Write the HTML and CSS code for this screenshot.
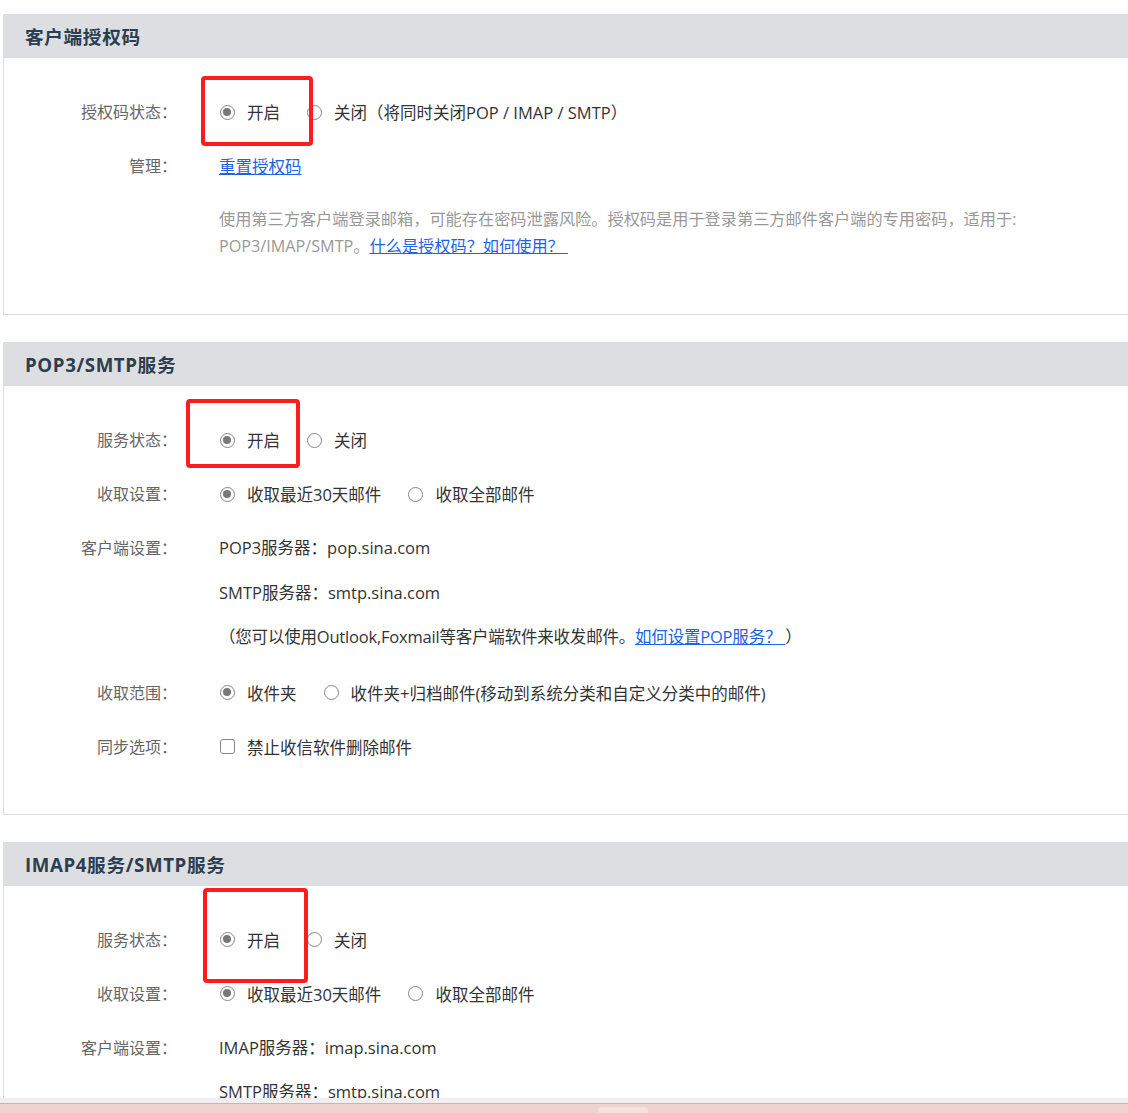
FILE: index.html
```html
<!doctype html>
<html lang="zh-CN">
  <head>
    <meta charset="UTF-8" />
    <meta name="viewport" content="width=device-width, initial-scale=1.0" />
    <title>客户端设置</title>
    <link rel="stylesheet" href="styles.css">
  </head>
  <body>
    <!-- 客户端授权码 -->
    <div class="section">
      <div class="section-head">客户端授权码</div>
      <div class="section-body body-auth">
        <div class="row">
          <div class="label">授权码状态：</div>
          <div class="value">
            <span class="opt"><span class="radio checked"></span>开启</span>
            <span class="opt"><span class="radio"></span>关闭（将同时关闭POP / IMAP / SMTP）</span>
          </div>
        </div>
        <div class="row">
          <div class="label">管理：</div>
          <div class="value"><a class="link" href="#">重置授权码</a></div>
        </div>
        <div class="desc">
          使用第三方客户端登录邮箱，可能存在密码泄露风险。授权码是用于登录第三方邮件客户端的专用密码，适用于:<br>
          POP3/IMAP/SMTP。<a class="link" href="#">什么是授权码？如何使用？&nbsp;</a>
        </div>
      </div>
      <div class="mark mark-auth"></div>
    </div>

    <!-- POP3/SMTP服务 -->
    <div class="section">
      <div class="section-head">POP3/SMTP服务</div>
      <div class="section-body body-pop">
        <div class="row">
          <div class="label">服务状态：</div>
          <div class="value">
            <span class="opt"><span class="radio checked"></span>开启</span>
            <span class="opt"><span class="radio"></span>关闭</span>
          </div>
        </div>
        <div class="row">
          <div class="label">收取设置：</div>
          <div class="value">
            <span class="opt"><span class="radio checked"></span>收取最近30天邮件</span>
            <span class="opt"><span class="radio"></span>收取全部邮件</span>
          </div>
        </div>
        <div class="row">
          <div class="label">客户端设置：</div>
          <div class="value multi">
            <div>POP3服务器：pop.sina.com</div>
            <div>SMTP服务器：smtp.sina.com</div>
            <div class="note">（您可以使用Outlook,Foxmail等客户端软件来收发邮件。<a class="link" href="#">如何设置POP服务？&nbsp;</a>）</div>
          </div>
        </div>
        <div class="row">
          <div class="label">收取范围：</div>
          <div class="value">
            <span class="opt"><span class="radio checked"></span>收件夹</span>
            <span class="opt"><span class="radio"></span>收件夹+归档邮件(移动到系统分类和自定义分类中的邮件)</span>
          </div>
        </div>
        <div class="row">
          <div class="label">同步选项：</div>
          <div class="value">
            <span class="opt"><span class="checkbox"></span>禁止收信软件删除邮件</span>
          </div>
        </div>
      </div>
      <div class="mark mark-pop"></div>
    </div>

    <!-- IMAP4服务/SMTP服务 -->
    <div class="section">
      <div class="section-head">IMAP4服务/SMTP服务</div>
      <div class="section-body body-imap">
        <div class="row">
          <div class="label">服务状态：</div>
          <div class="value">
            <span class="opt"><span class="radio checked"></span>开启</span>
            <span class="opt"><span class="radio"></span>关闭</span>
          </div>
        </div>
        <div class="row">
          <div class="label">收取设置：</div>
          <div class="value">
            <span class="opt"><span class="radio checked"></span>收取最近30天邮件</span>
            <span class="opt"><span class="radio"></span>收取全部邮件</span>
          </div>
        </div>
        <div class="row">
          <div class="label">客户端设置：</div>
          <div class="value multi">
            <div>IMAP服务器：imap.sina.com</div>
            <div>SMTP服务器：smtp.sina.com</div>
          </div>
        </div>
      </div>
      <div class="mark mark-imap"></div>
    </div>

    <div class="bottom-bar"><span class="bottom-tab"></span></div>
  </body>
</html>
```

FILE: styles.css
```css
html,
body {
  height: 100%;
  overflow: hidden;
}

body {
  margin: 0;
  padding: 14px 0 0 3px;
  box-sizing: border-box;
  font-family: "Open Sans", "Noto Sans CJK SC", sans-serif;
  background-color: #fff;
  color: #333;
}

.section {
  position: relative;
  margin-bottom: 27px;
}

.section-head {
  height: 44px;
  line-height: 46px;
  padding-left: 22px;
  background-color: #dcdee2;
  color: #2c3e50;
  font-size: 18.7px;
  font-weight: bold;
  letter-spacing: 0.6px;
}

.section-body {
  border-left: 1px solid #dcdcdc;
  border-bottom: 1px solid #dcdcdc;
  padding-top: 27px;
}

.body-auth {
  padding-bottom: 54px;
}

.body-pop {
  padding-bottom: 40px;
}

.body-imap {
  padding-bottom: 120px;
}

.row {
  display: flex;
  align-items: flex-start;
}

.label {
  width: 173px;
  height: 54px;
  flex: none;
  text-align: right;
  line-height: 54px;
  font-size: 16px;
  color: #666;
}

.value {
  display: flex;
  align-items: center;
  height: 54px;
  margin-left: 42px;
  font-size: 16.5px;
  color: #333;
  white-space: nowrap;
}

.value.multi {
  flex-direction: column;
  align-items: flex-start;
  height: auto;
  padding: 5px 0 6px;
  line-height: 44.5px;
}

.note {
  letter-spacing: -0.2px;
}

.opt {
  display: flex;
  align-items: center;
  margin-right: 26px;
}

.radio,
.checkbox {
  flex: none;
  box-sizing: border-box;
  width: 15px;
  height: 15px;
  margin: 0 12px 0 1px;
  border: 1.5px solid #878787;
  background-color: #fff;
}

.radio {
  position: relative;
  border-radius: 50%;
}

.radio.checked::after {
  content: "";
  position: absolute;
  left: 2px;
  top: 2px;
  width: 8px;
  height: 8px;
  border-radius: 50%;
  background-color: #787878;
}

.checkbox {
  border-radius: 3px;
}

.link {
  color: #1e62e6;
  text-decoration: underline;
}

.desc {
  margin: 13px 0 0 215px;
  line-height: 27px;
  font-size: 16.2px;
  color: #999;
}

/* red annotation frames */
.mark {
  position: absolute;
  box-sizing: border-box;
  border: 4px solid #ff1c1c;
  border-radius: 4px;
}

.mark-auth {
  left: 198px;
  top: 62px;
  width: 112px;
  height: 70px;
}

.mark-pop {
  left: 183px;
  top: 57px;
  width: 114px;
  height: 69px;
}

.mark-imap {
  left: 200px;
  top: 46px;
  width: 105px;
  height: 95px;
}

.bottom-bar {
  position: fixed;
  left: 0;
  right: 0;
  bottom: 0;
  height: 9px;
  background-color: #f0d3cf;
  border-top: 1px solid #c7b6b2;
  box-shadow: 0 -5px 0 #efeff1;
}

.bottom-tab {
  position: absolute;
  left: 598px;
  top: 3px;
  width: 50px;
  height: 6px;
  border-radius: 3px 3px 0 0;
  background-color: #f4e2df;
}
```
